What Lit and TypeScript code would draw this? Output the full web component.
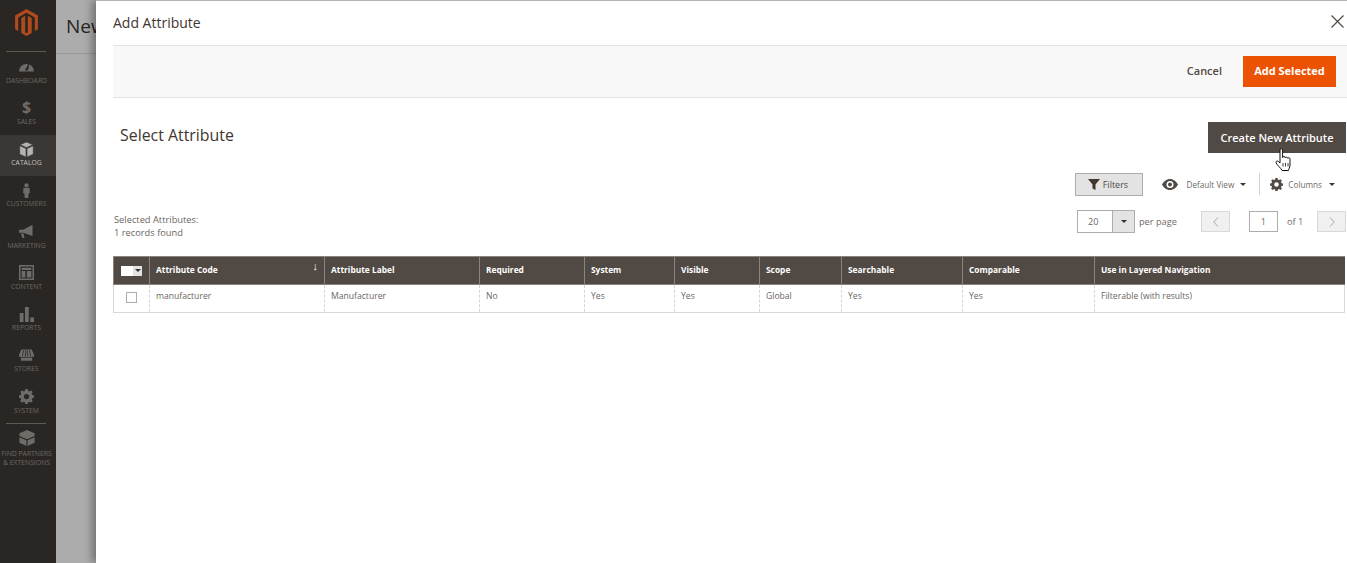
import { LitElement, html, css, svg } from "lit";
import { customElement } from "lit/decorators.js";

const icons: Record<string, any> = {
  dashboard: svg`<path d="M0 16.500a10 10 0 1 1 20 0z" /><path d="M10 13l3.500-8-1.500 8.500z" fill="#2a2623" stroke="#2a2623"/><circle cx="10" cy="14" r="1.600" fill="#2a2623"/>`,
  catalog: svg`<path d="M10 0l8.500 3.600L10 7.400 1.500 3.600z"/><path d="M1 5l8.300 3.700V20L1 16.300z"/><path d="M19 5l-8.300 3.700V20L19 16.300z"/>`,
  customers: svg`<circle cx="10" cy="3" r="2.800"/><path d="M6 6.400h8l.6 7-1.700.4-.6 6.200H7.700l-.6-6.200-1.700-.4z"/>`,
  marketing: svg`<path d="M0 7.500h5.500L18 1v15L5.500 11.500H0z"/><path d="M2.500 12.500h3.500l1.500 6H4.500z"/>`,
  content: svg`<path fill-rule="evenodd" d="M0 0h20v20H0zM2 2v16h16V2z"/><path d="M3.500 3.500h13v3h-13zM3.500 8h5v8.500h-5zM10.500 8h6v8.500h-6z"/>`,
  reports: svg`<path d="M1 8h5v12H1zM8 0h5v20H8zM15 14h5v6h-5z"/>`,
  stores: svg`<path d="M3 2h14l3.500 8c0 1.800-2 2.400-3 1.300V17H2.500v-5.700c-1 1.100-3 .5-3-1.300z"/><path d="M6 3L4.500 11M9 3l-.5 8M11 3l.5 8M14 3l1.500 8M2.500 12.500h15" stroke="#2a2623" stroke-width="1" fill="none"/>`,
  system: svg`<path fill-rule="evenodd" d="M8.300 0h3.400l.5 2.500 1.700.7 2.100-1.400 2.300 2.300-1.400 2.100.7 1.700 2.400.5v3.300l-2.400.5-.7 1.700 1.400 2.100-2.300 2.300-2.100-1.400-1.700.7-.5 2.400H8.300l-.5-2.400-1.700-.7L4 18.300 1.700 16l1.400-2.100-.7-1.700L0 11.700V8.400l2.400-.5.700-1.700L1.700 4.100 4 1.800l2.100 1.400 1.700-.7zM10 6.500a3.500 3.500 0 1 0 0 7 3.500 3.500 0 0 0 0-7z"/>`,
  partners: svg`<path d="M10 0l9.500 4v3.500L10 11.500.5 7.500V4z"/><path d="M.5 9l8.800 3.800V20L.5 16zM19.500 9l-8.800 3.800V20l8.800-4z"/>`,
};

const nav = [
  ["dashboard", "DASHBOARD"], ["sales", "SALES"], ["catalog", "CATALOG"], ["customers", "CUSTOMERS"],
  ["marketing", "MARKETING"], ["content", "CONTENT"], ["reports", "REPORTS"], ["stores", "STORES"], ["system", "SYSTEM"],
];

const columns = [
  ["Attribute Code", 175], ["Attribute Label", 155], ["Required", 105], ["System", 90], ["Visible", 85],
  ["Scope", 82], ["Searchable", 121], ["Comparable", 132], ["Use in Layered Navigation", 250],
];
const row = ["manufacturer", "Manufacturer", "No", "Yes", "Yes", "Global", "Yes", "Yes", "Filterable (with results)"];

@customElement("app-root")
export class AppRoot extends LitElement {
  static styles = css`
    :host { display: block; width: 1347px; height: 563px; overflow: hidden; font-family: "Open Sans", sans-serif; color: #41362f; background: #fff; }
    .shell { display: flex; height: 563px; }
    .side { width: 56px; flex: none; background: #2a2623; display: flex; flex-direction: column; align-items: stretch; }
    .logo { height: 51px; display: flex; justify-content: center; padding: 9px 3px 0 0; box-sizing: border-box; }
    .rule { height: 1px; background: #5d5955; margin: 0 10px 0 6px; flex: none; }
    .item { height: 41.25px; display: flex; flex-direction: column; align-items: center; color: #6c6966; font-size: 6.800px; line-height: 9px; padding: 7px 3px 0 0; box-sizing: border-box; }
    .item.on { background: #3b3734; color: #c4c2c0; }
    .item svg { width: 15px; height: 15px; fill: #6e6b68; margin-bottom: 1.500px; flex: none; }
    .item.on svg { fill: #b5b3b1; }
    .item.on svg * { stroke: #3b3734; stroke-width: .8; }
    .dollar { height: 15px; margin-bottom: 1.500px; font: bold 16px/15px "Open Sans", sans-serif; color: #6e6b68; }
    .partner { padding: 6px 3px 0 0; display: flex; flex-direction: column; align-items: center; color: #6c6966; font-size: 6.800px; line-height: 9px; text-align: center; white-space: nowrap; }
    .partner svg { width: 16px; height: 16px; fill: #6e6b68; margin-bottom: 3px; }
    .partner span { display: block; }
    .page { width: 40px; flex: none; background: #acacac; overflow: hidden; }
    .pagehead { height: 54px; border-bottom: 1px solid #999; box-sizing: border-box; padding: 13px 0 0 10px; font-size: 19px; line-height: 27px; color: #252525; white-space: nowrap; }

    .modal { flex: 1; position: relative; min-width: 0; background: #fff; border-top: 1px solid #b4b4b4; box-shadow: -4px 0 8px rgba(0,0,0,.35); display: flex; flex-direction: column; padding-left: 17px; box-sizing: border-box; }
    .mhead { height: 44px; flex: none; display: flex; align-items: center; justify-content: space-between; font-size: 14px; color: #41362f; padding-bottom: 1px; box-sizing: border-box; }
    .close { width: 13px; height: 13px; margin-right: 3px; margin-top: -3px; stroke: #514943; stroke-width: 1.2; fill: none; }
    .actions { height: 53px; flex: none; background: #f8f8f8; border-top: 1px solid #e3e3e3; border-bottom: 1px solid #e3e3e3; box-sizing: border-box; display: flex; align-items: center; justify-content: flex-end; gap: 21px; padding-right: 11px; }
    .cancel { font-size: 11px; font-weight: 600; color: #514943; line-height: 14px; margin-top: -2px; }
    .add { width: 93px; height: 31px; background: #eb5202; color: #fff; font-size: 11px; font-weight: 700; display: flex; align-items: center; justify-content: center; padding-bottom: 2px; box-sizing: border-box; }
    .titlebar { display: flex; justify-content: space-between; padding: 24px 1px 0 7px; height: 54px; box-sizing: border-box; flex: none; position: relative; }
    .title { font-size: 15.900px; line-height: 24px; color: #41362f; margin-top: 1px; }
    .create { width: 138px; height: 31px; background: #514943; color: #fff; font-size: 11px; font-weight: 600; display: flex; align-items: center; justify-content: center; white-space: nowrap; }
    .cursor { position: absolute; right: 54px; top: 50px; width: 19px; height: 24px; }

    .tools { height: 34px; flex: none; display: flex; align-items: center; justify-content: flex-end; padding: 0 12px 0 0; font-size: 8.200px; color: #6f6a66; margin-top: 15px; box-sizing: border-box; }
    .filters { width: 68px; height: 23px; background: #e3e3e3; border: 1px solid #adadad; box-sizing: border-box; display: flex; align-items: center; justify-content: center; gap: 3px; color: #514943; font-size: 9px; margin-right: 19px; padding-right: 3px; }
    .filters svg { width: 12px; height: 12px; fill: #41362f; }
    .view { display: flex; align-items: center; }
    .view svg.eye { fill: #514943; margin-right: 8px; }
    .view svg.gear { fill: #514943; margin-right: 5px; }
    .caret { width: 0; height: 0; border-left: 3px solid transparent; border-right: 3px solid transparent; border-top: 3px solid #41362f; margin-left: 6px; }
    .view:last-child .caret { margin-left: 7px; }
    .sep { width: 1px; height: 22px; background: #d4d4d4; margin: 0 10px 0 13px; }

    .pager { height: 33px; flex: none; display: flex; justify-content: space-between; align-items: flex-start; padding: 0 1px; margin-top: 9px; box-sizing: border-box; }
    .found { font-size: 9.300px; line-height: 13px; color: #6b6560; padding-top: 3px; }
    .pg { display: flex; align-items: center; font-size: 9.200px; color: #6f6a66; height: 23px; }
    .sel { width: 58px; height: 23px; border: 1px solid #adadad; box-sizing: border-box; display: flex; background: #fff; }
    .sel b { flex: 1; font-weight: 400; padding-left: 10px; line-height: 21px; }
    .sel i { width: 21px; background: #e3e3e3; border-left: 1px solid #adadad; display: flex; align-items: center; justify-content: center; }
    .sel .caret { margin: 0; border-top-color: #333; }
    .perpage { margin-left: 4px; width: 62px; }
    .nav { width: 29px; height: 21px; background: #f0f0f0; border: 1px solid #d9d9d9; box-sizing: border-box; display: flex; align-items: center; justify-content: center; }
    .nav svg { width: 6px; height: 10px; stroke: #a9a9a9; fill: none; stroke-width: 1; }
    .num { width: 29px; height: 21px; border: 1px solid #adadad; box-sizing: border-box; text-align: center; line-height: 19px; margin-left: 19px; }
    .of { margin: 0 13px 0 9px; width: 17px; white-space: nowrap; }

    table { border-collapse: collapse; table-layout: fixed; width: 1231px; margin-top: 13px; font-size: 8.600px; }
    th { height: 28px; background: #514943; color: #fff; font-weight: 700; text-align: left; padding: 0 0 3px 6px; border: 1px solid #8a837e; border-width: 1px 1px 1px 0; box-sizing: border-box; font-size: 8.400px; position: relative; white-space: nowrap; }
    th:first-child { border-left: 1px solid #8a837e; padding: 0; }
    th:last-child { border-right: none; }
    td { height: 28px; box-sizing: border-box; padding: 0 0 5px 6px; color: #6b6560; border-bottom: 1px solid #d9d9d9; border-left: 1px dashed #d6d6d6; white-space: nowrap; }
    tr td:first-child { border-left: 1px solid #d9d9d9; padding: 0; }
    tr td:last-child { border-right: 1px solid #d9d9d9; }
    .hcheck { display: flex; margin-left: 7px; width: 21px; height: 10px; background: #e3e3e3; }
    .hcheck b { width: 12px; background: #fff; }
    .hcheck i { flex: 1; display: flex; align-items: center; justify-content: center; }
    .hcheck .caret { margin: 0; border-top-color: #333; }
    .rcheck { width: 11px; height: 11px; border: 1px solid #adadad; margin: 0 0 3px 12px; box-sizing: border-box; }
    .arrow { position: absolute; right: 6px; top: 3px; font-size: 11px; font-weight: 400; line-height: 12px; color: #fff; }
  `;

  render() {
    return html`
      <div class="shell">
        <aside class="side">
          <div class="logo">
            <svg width="23" height="27" viewBox="0 0 22 26"><path fill="#b14a1c" d="M11 0L0 6.300V19.500l3 1.800V8.100L11 3.500l8 4.600V21.300l3-1.800V6.300z"/><path fill="#b14a1c" d="M12.300 6.500v16.100L11 23.400l-1.300-.8V6.500L6 8.700v14.500L11 26l5-2.800V8.700z"/></svg>
          </div>
          <div class="rule"></div>
          <div>
            ${nav.map(([k, l]) => html`<div class="item ${k === "catalog" ? "on" : ""}">
              ${k === "sales" ? html`<div class="dollar">$</div>` : html`<svg viewBox="0 0 20 20">${icons[k]}</svg>`}
              <span>${l}</span></div>`)}
          </div>
          <div class="rule"></div>
          <div class="partner"><svg viewBox="0 0 20 20">${icons.partners}</svg><span>FIND PARTNERS</span><span>&amp; EXTENSIONS</span></div>
        </aside>
        <div class="page"><div class="pagehead">New</div></div>
        <section class="modal">
          <div class="mhead"><span>Add Attribute</span><svg class="close" viewBox="0 0 13 13"><path d="M.5.5l12 12M12.500.5l-12 12"/></svg></div>
          <div class="actions"><span class="cancel">Cancel</span><span class="add">Add Selected</span></div>
          <div class="titlebar"><span class="title">Select Attribute</span><span class="create">Create New Attribute</span>
            <svg class="cursor" viewBox="0 0 19 24"><path fill="#fff" stroke="#111" stroke-width="1" stroke-linejoin="round" d="M6 2c0-1.800 2.600-1.800 2.600 0v7.500c.3-1.300 2.500-1.300 2.600 0v.5c.3-1.200 2.400-1.200 2.500.3.400-1 2.300-.8 2.300.9v5.800c0 2.800-1.500 3.800-1.500 5.500H8c-.5-2-5.800-6-6-8-.2-1.600 1.500-1.900 2.500-.9l1.500 1.400z"/><path stroke="#111" stroke-width=".8" d="M9 15v3.500M11.500 15v3.500M14 15v3.500"/></svg>
          </div>
          <div class="tools">
            <div class="filters"><svg viewBox="0 0 12 12"><path d="M0 1h12L7.500 6.500V12l-3-1.500v-4z"/></svg>Filters</div>
            <div class="view"><svg class="eye" width="16" height="11" viewBox="0 0 16 11"><path fill-rule="evenodd" d="M8 0c3.500 0 6.500 2.500 8 5.500C14.500 8.500 11.500 11 8 11S1.500 8.500 0 5.500C1.500 2.500 4.500 0 8 0zm0 2a3.500 3.500 0 1 0 0 7 3.500 3.500 0 0 0 0-7zm0 1.500a2 2 0 1 1 0 4 2 2 0 0 1 0-4z"/></svg>Default View<span class="caret"></span></div>
            <div class="sep"></div>
            <div class="view"><svg class="gear" width="13" height="13" viewBox="0 0 20 20">${icons.system}</svg>Columns<span class="caret"></span></div>
          </div>
          <div class="pager">
            <div class="found">Selected Attributes:<br />1 records found</div>
            <div class="pg">
              <div class="sel"><b>20</b><i><span class="caret"></span></i></div>
              <span class="perpage">per page</span>
              <div class="nav"><svg viewBox="0 0 6 10"><path d="M5 .5L.8 5 5 9.500"/></svg></div>
              <div class="num">1</div>
              <span class="of">of 1</span>
              <div class="nav"><svg viewBox="0 0 6 10"><path d="M1 .5L5.200 5 1 9.500"/></svg></div>
            </div>
          </div>
          <table>
            <colgroup><col style="width:36px" />${columns.map(c => html`<col style="width:${c[1]}px" />`)}</colgroup>
            <thead><tr><th><div class="hcheck"><b></b><i><span class="caret"></span></i></div></th>
              ${columns.map((c, i) => html`<th>${c[0]}${i === 0 ? html`<span class="arrow">↓</span>` : ""}</th>`)}</tr></thead>
            <tbody><tr><td><div class="rcheck"></div></td>${row.map(v => html`<td>${v}</td>`)}</tr></tbody>
          </table>
        </section>
      </div>
    `;
  }
}
